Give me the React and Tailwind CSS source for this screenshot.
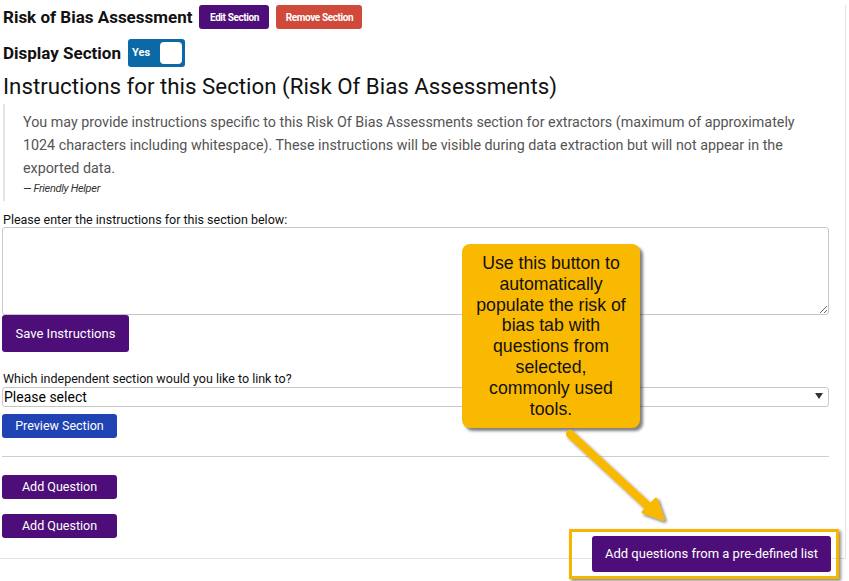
import React, { useState } from 'react';

const purple = 'bg-[#4d0e79]';

const App = () => {
  const [display, setDisplay] = useState(true);
  const [instructions, setInstructions] = useState('');
  const [linked, setLinked] = useState('');

  return (
    <div className="relative w-[849px] h-[581px] overflow-hidden bg-white font-['Roboto',sans-serif] text-[#111]">
      <div className="w-[846px] h-[554px] border-r border-b border-[#e2e2e2]">
        <div className="w-[829px] pl-[2px]">
          {/* Section header */}
          <div className="flex items-center h-[24px] mt-[5px] pl-[1px]">
            <h2 className="text-[17px] font-bold leading-none">Risk of Bias Assessment</h2>
            <button className={`ml-[7px] h-[24px] w-[70px] rounded-[3px] ${purple} text-white text-[10px] font-bold tracking-[-0.4px]`}>
              Edit Section
            </button>
            <button className="ml-[7px] h-[24px] w-[86px] rounded-[3px] bg-[#cf4a3b] text-white text-[10px] font-bold tracking-[-0.4px]">
              Remove Section
            </button>
          </div>

          {/* Display toggle */}
          <div className="flex items-center h-[28px] mt-[10px] pl-[1px]">
            <span className="text-[17px] font-bold leading-none">Display Section</span>
            <button
              onClick={() => setDisplay(!display)}
              className="ml-[7px] flex items-center justify-between w-[57px] h-[28px] rounded-[3px] bg-[#0b69a7] pl-[4px] pr-[3px]"
            >
              <span className="text-white text-[11px] font-bold">{display ? 'Yes' : 'No'}</span>
              <span className="w-[22px] h-[22px] rounded-[4px] bg-white" />
            </button>
          </div>

          <h1 className="mt-[4px] pl-[1px] text-[22.3px] leading-[30px] font-normal">
            Instructions for this Section (Risk Of Bias Assessments)
          </h1>

          <blockquote className="mt-[3px] ml-[1px] border-l-2 border-[#e3e3e3] pl-[18px] pt-[7px] pb-[3px] text-[#555]">
            <p className="text-[14.3px] leading-[23px] pr-[20px]">
              You may provide instructions specific to this Risk Of Bias Assessments section for extractors (maximum of approximately 1024 characters including whitespace). These instructions will be visible during data extraction but will not appear in the exported data.
            </p>
            <p className="text-[11px] italic leading-[18px] text-[#333] tracking-[-0.3px]">— Friendly Helper</p>
          </blockquote>

          <label className="block mt-[12px] text-[12.5px] leading-[14px] pl-[1px]">
            Please enter the instructions for this section below:
          </label>
          <textarea
            value={instructions}
            onChange={(e) => setInstructions(e.target.value)}
            className="block w-full h-[88px] border border-[#c8c8c8] rounded-[3px] outline-none p-1 text-[13px]"
          />
          <button className={`block h-[37px] w-[127px] rounded-[3px] ${purple} text-white text-[13px]`}>
            Save Instructions
          </button>

          <label className="block mt-[19px] text-[12.5px] leading-[16px] pl-[1px]">
            Which independent section would you like to link to?
          </label>
          <div className="relative">
            <select
              value={linked}
              onChange={(e) => setLinked(e.target.value)}
              className="block w-full h-[20px] border border-[#c8c8c8] rounded-[3px] appearance-none text-[14px] leading-[18px] pl-[1px] outline-none bg-white text-black"
            >
              <option value="">Please select</option>
            </select>
            <span className="absolute right-[6px] top-[6px] w-0 h-0 border-l-[4px] border-r-[4px] border-t-[6px] border-l-transparent border-r-transparent border-t-[#333] pointer-events-none" />
          </div>
          <button className="block mt-[7px] h-[24px] w-[115px] rounded-[3px] bg-[#1f43b2] text-white text-[12.5px]">
            Preview Section
          </button>

          <hr className="mt-[18px] border-0 border-t border-[#cfcfcf]" />

          <button className={`block mt-[18px] h-[24px] w-[115px] rounded-[3px] ${purple} text-white text-[12.5px]`}>
            Add Question
          </button>
          <button className={`block mt-[15px] h-[24px] w-[115px] rounded-[3px] ${purple} text-white text-[12.5px]`}>
            Add Question
          </button>
        </div>
      </div>

      {/* Highlighted pre-defined list button */}
      <div className="absolute left-[569px] top-[529px] w-[270px] h-[50px] border-[3px] border-[#f7b500] shadow-[2px_2px_3px_rgba(0,0,0,0.45)] flex items-center justify-end pr-[5px]">
        <button className={`h-[36px] w-[239px] rounded-[3px] ${purple} text-white text-[13px]`}>
          Add questions from a pre-defined list
        </button>
      </div>

      {/* Callout */}
      <div className="absolute left-[462px] top-[244px] w-[178px] h-[184px] rounded-[8px] bg-[#f9b900] shadow-[3px_3px_3px_rgba(0,0,0,0.5)] pt-[9px] px-[12px] text-center font-['Liberation_Sans',Arial,sans-serif] text-[17.7px] leading-[20.8px] text-[#111]">
        Use this button to automatically populate the risk of bias tab with questions from selected, commonly used tools.
      </div>

      {/* Arrow */}
      <svg className="absolute left-0 top-0 pointer-events-none" width="849" height="581" viewBox="0 0 849 581">
        <defs>
          <filter id="sh" x="-20%" y="-20%" width="140%" height="140%">
            <feDropShadow dx="2" dy="2" stdDeviation="1.5" floodColor="#000" floodOpacity="0.55" />
          </filter>
        </defs>
        <g filter="url(#sh)" fill="#f9b900">
          <line x1="570" y1="434" x2="650" y2="508" stroke="#f9b900" strokeWidth="8" strokeLinecap="round" />
          <polygon points="663,519 643,512 656,499" stroke="#f9b900" strokeWidth="3" strokeLinejoin="round" />
        </g>
      </svg>
    </div>
  );
};

export default App;
